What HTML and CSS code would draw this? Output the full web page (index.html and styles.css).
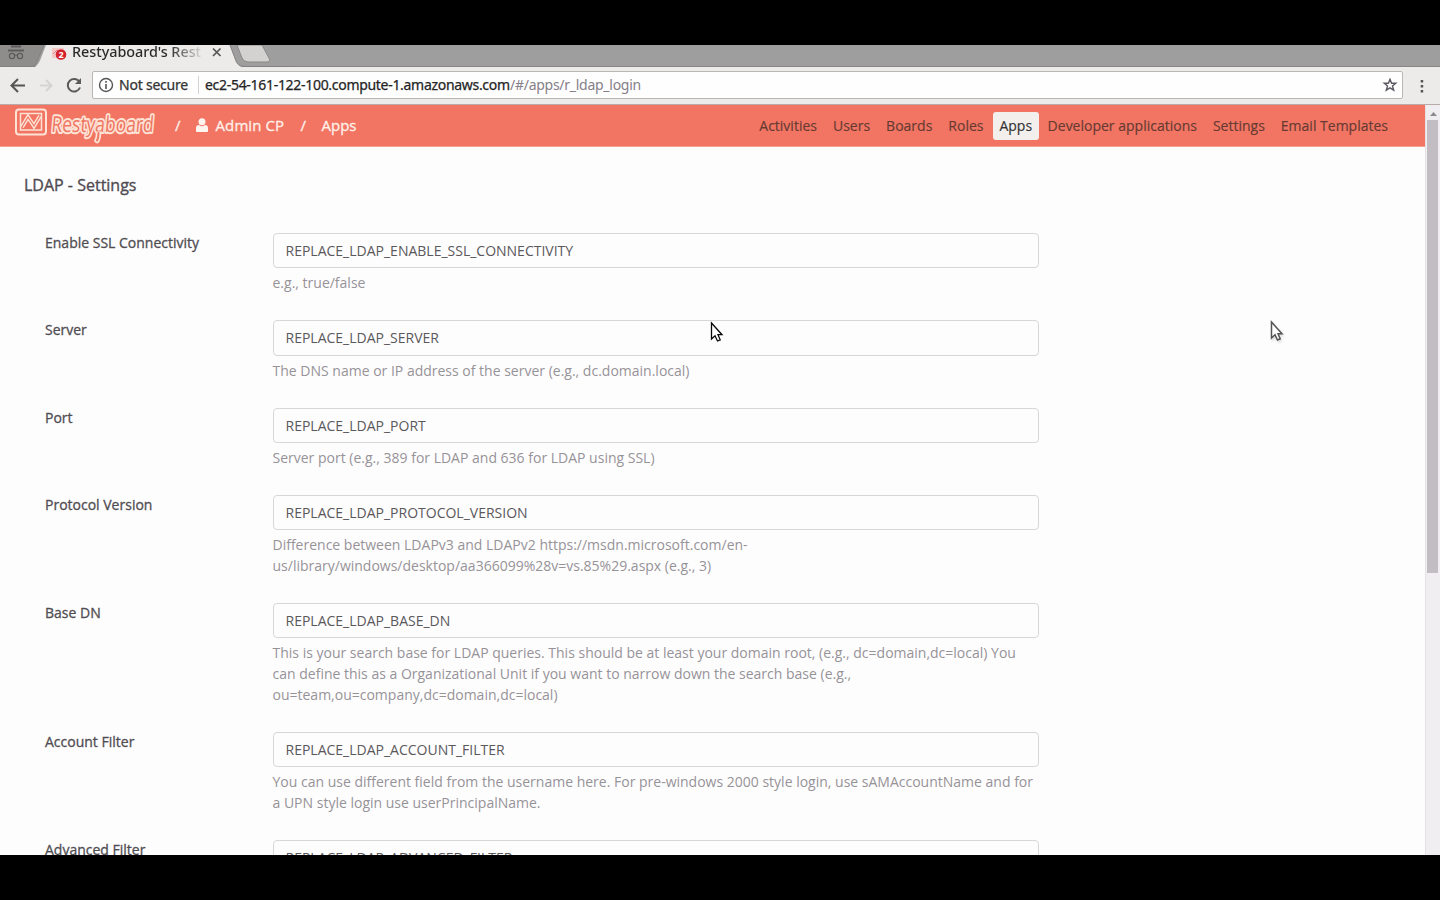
FILE: index.html
```html
<!DOCTYPE html>
<html lang="en">
<head>
<meta charset="utf-8">
<title>Restyaboard's Restyaboard</title>
<link rel="stylesheet" href="styles.css">
</head>
<body>
<div class="screen">
  <div class="tabstrip">
    <svg class="tabs" width="290" height="22" viewBox="0 0 290 22">
      <path d="M0 0H44L35 21H0Z" fill="#8f8d8c"/>
      <path d="M35 22Q39 19 41 13L46 0H230L236 16Q238 21 243 22Z" fill="#ecebea"/>
      <path d="M44 0L36 19Q35 21 32 21.500H0M230 0L236 16Q238 21 243 21.500H290" fill="none" stroke="#83817f"/>
      <path d="M237 0H262L270 15Q270 17 267 17H248Q244 17 242 13Z" fill="#d3d2d0" stroke="#8a8886"/>
      <g stroke="#5d5b5a" fill="none" stroke-width="1.200"><path d="M8 5.500H24M11 1.500H21" stroke-width="2"/><circle cx="12" cy="11" r="2.600"/><circle cx="20" cy="11" r="2.600"/><path d="M14.500 10.500Q16 9.500 17.500 10.500"/></g>
      <path d="M52 3H64V13H52Z" fill="#f3c8c6"/><path d="M53 9L57 5L60 8" stroke="#e78884" fill="none"/>
      <circle cx="61" cy="9.500" r="5.300" fill="#d3222b"/>
      <text x="58.500" y="13" class="badge">2</text>
      <path d="M213 3.500L220.500 11M220.500 3.500L213 11" stroke="#555" stroke-width="1.700"/>
    </svg>
    <span class="tab-title">Restyaboard's Rest</span>
  </div>
  <div class="toolbar">
    <svg class="nav-icons" width="92" height="36" viewBox="0 0 92 36" fill="none" stroke-width="2">
      <path d="M25 18.500H12M18 12L11.500 18.500L18 25" stroke="#555"/>
      <path d="M40 18.500H51M46 13L51.500 18.500L46 24" stroke="#d5d4d4"/>
      <path d="M79.500 15A6.300 6.300 0 1 0 80 20.500" stroke="#5a5a5a"/><path d="M81 11V17H75Z" fill="#5a5a5a"/>
    </svg>
    <div class="address">
      <svg width="16" height="16" viewBox="0 0 16 16" fill="none" stroke="#555"><circle cx="8" cy="8" r="6.500" stroke-width="1.400"/><path d="M8 7V12M8 4V5.700" stroke-width="1.600"/></svg>
      <span class="secure">Not secure</span><span class="divider"></span><span class="host">ec2-54-161-122-100.compute-1.amazonaws.com</span><span class="path">/#/apps/r_ldap_login</span>
      <svg class="star" width="16" height="16" viewBox="0 0 16 16"><path d="M8 2.300L9.600 6.300H13.700L10.500 9L11.700 13.200L8 10.800L4.300 13.200L5.500 9L2.300 6.300H6.400Z" fill="none" stroke="#5c5962" stroke-width="1.400"/></svg>
    </div>
    <svg class="more" width="6" height="16" viewBox="0 0 6 16" fill="#555"><path d="M1.700 2H4.200V4.500H1.700ZM1.700 7H4.200V9.500H1.700ZM1.700 12H4.200V14.500H1.700Z"/></svg>
  </div>
  <div class="viewport">
    <main class="page">
      <header class="header">
        <svg class="logo" width="144" height="41" viewBox="0 0 144 41">
          <rect x="2" y="4.500" width="30" height="25" rx="3" fill="none" stroke="#fde3d6" stroke-width="2"/>
          <rect x="6.500" y="8.500" width="21" height="16.500" fill="none" stroke="#fde3d6" stroke-width="1.500"/>
          <path d="M8 22L14 12L20 21L26 11" fill="none" stroke="#fde3d6" stroke-width="4"/>
          <path d="M8 22L14 12L20 21L26 11" fill="none" stroke="#ee7663" stroke-width="1.200"/>
          <g transform="skewX(-5)"><text x="39.500" y="27.500" textLength="102" lengthAdjust="spacingAndGlyphs" class="wordmark">Restyaboard</text></g>
          <path d="M84.500 29Q84.500 33 83 35.500" fill="none" stroke="#fde3d6" stroke-width="5.500" stroke-linecap="round"/><path d="M84.500 28Q84.500 33 83 35.500" fill="none" stroke="#ee7663" stroke-width="2" stroke-linecap="round"/>
        </svg>
        <div class="crumbs"><span>/</span>
          <svg class="user" width="12" height="14" viewBox="0 0 12 14" fill="#fff5ef"><circle cx="6" cy="3.700" r="3.500"/><path d="M0 13V10Q0 7 3 7Q6 9.500 9 7Q12 7 12 10V13Q12 14 11 14H1Q0 14 0 13Z"/></svg>
          <span class="admin">Admin CP</span><span class="slash">/</span><span class="current">Apps</span></div>
        <nav class="menu"><a>Activities</a><a>Users</a><a>Boards</a><a>Roles</a><a class="active">Apps</a><a>Developer applications</a><a>Settings</a><a>Email Templates</a></nav>
      </header>
      <h1 class="title">LDAP - Settings</h1>
      <form class="form">
        <div class="row"><label>Enable SSL Connectivity</label><div class="field"><div class="input">REPLACE_LDAP_ENABLE_SSL_CONNECTIVITY</div><p>e.g., true/false</p></div></div>
        <div class="row"><label>Server</label><div class="field"><div class="input">REPLACE_LDAP_SERVER</div><p>The DNS name or IP address of the server (e.g., dc.domain.local)</p></div></div>
        <div class="row"><label>Port</label><div class="field"><div class="input">REPLACE_LDAP_PORT</div><p>Server port (e.g., 389 for LDAP and 636 for LDAP using SSL)</p></div></div>
        <div class="row"><label>Protocol Version</label><div class="field"><div class="input">REPLACE_LDAP_PROTOCOL_VERSION</div><p>Difference between LDAPv3 and LDAPv2 https://msdn.microsoft.com/en-<br>us/library/windows/desktop/aa366099%28v=vs.85%29.aspx (e.g., 3)</p></div></div>
        <div class="row"><label>Base DN</label><div class="field"><div class="input">REPLACE_LDAP_BASE_DN</div><p>This is your search base for LDAP queries. This should be at least your domain root, (e.g., dc=domain,dc=local) You<br>can define this as a Organizational Unit if you want to narrow down the search base (e.g.,<br>ou=team,ou=company,dc=domain,dc=local)</p></div></div>
        <div class="row"><label>Account Filter</label><div class="field"><div class="input">REPLACE_LDAP_ACCOUNT_FILTER</div><p>You can use different field from the username here. For pre-windows 2000 style login, use sAMAccountName and for<br>a UPN style login use userPrincipalName.</p></div></div>
        <div class="row"><label>Advanced Filter</label><div class="field"><div class="input">REPLACE_LDAP_ADVANCED_FILTER</div></div></div>
      </form>
    </main>
    <div class="scrollbar"><svg width="15" height="15" viewBox="0 0 15 15"><path d="M4 11L7.500 7L11 11Z" fill="#8d8b8c"/></svg><div class="thumb"></div></div>
  </div>
  <svg class="cursor c1" width="16" height="24" viewBox="0 0 16 24"><path d="M1.500 2V18L5 14.800L7.500 20L10.200 18.800L8 13.700H12Z" fill="#fff" stroke="#080808" stroke-width="1.300"/></svg>
  <svg class="cursor c2" width="16" height="24" viewBox="0 0 16 24"><path d="M1.500 2V18L5 14.800L7.500 20L10.200 18.800L8 13.700H12Z" fill="#fff" stroke="#555356" stroke-width="1.500"/></svg>
</div>
</body>
</html>
```
FILE: styles.css
```css
* { box-sizing: border-box; }
body { margin: 0; background: #000; font-family: "Open Sans", sans-serif; }
.screen { position: relative; width: 1440px; height: 810px; margin-top: 45px; overflow: hidden; display: flex; flex-direction: column; background: #fefdfe; }
.tabstrip { height: 22px; flex: none; background: #9f9e9e; border-bottom: 1px solid #888685; position: relative; }
.tabs { display: block; }
.badge { font: bold 9px "Open Sans", sans-serif; fill: #fff; }
.tab-title { position: absolute; left: 72px; top: -3px; font: 500 14.400px/20px "Noto Sans", sans-serif; white-space: nowrap; letter-spacing: -.05px; background: linear-gradient(90deg, #292929 75%, #d5d5d5); -webkit-background-clip: text; color: transparent; }
.toolbar { height: 38px; flex: none; display: flex; background: #ecebea; border-bottom: 1px solid #b8aaa9; align-items: flex-start; }
.nav-icons { flex: none; }
.address { width: 1311px; height: 28px; margin-top: 4px; border: 1px solid #b9b8b5; border-radius: 2px; background: #fefefe; display: flex; align-items: center; padding: 0 5px; font: 14px/20px "Noto Sans", sans-serif; white-space: nowrap; }
.secure { margin-left: 5px; width: 79px; flex: none; color: #333; letter-spacing: -.22px; -webkit-text-stroke: .25px #333; }
.divider { width: 1px; height: 18px; background: #d2d1d1; margin-right: 6px; }
.host { color: #242424; width: 305px; flex: none; letter-spacing: -.3px; -webkit-text-stroke: .25px #242424; }
.path { color: #858088; letter-spacing: -.27px; }
.star { margin-left: auto; position: relative; left: 1px; }
.more { margin: 11px 0 0 16px; }
.viewport { display: flex; height: 750px; flex: none; }
.page { width: 1425px; }
.header { height: 42px; display: flex; align-items: center; background: #f27564; border-bottom: 1px solid #f7a092; }
.logo { margin-left: 14px; flex: none; }
.wordmark { font: 500 22px "Open Sans", sans-serif; fill: #ee7663; stroke: #fde3d6; stroke-width: 4px; paint-order: stroke; stroke-linejoin: round; }
.crumbs { display: flex; align-items: center; color: #fff1e9; font-size: 15px; line-height: 20px; margin: -2px 0 0 17px; white-space: nowrap; -webkit-text-stroke: .3px #fff1e9; }
.user { margin: 0 8px 0 15px; }
.admin { width: 85px; letter-spacing: .1px; }
.current { width: 40px; }
.slash { width: 21px; }
.menu { display: flex; margin-left: auto; margin-right: 37px; color: #663a31; font-size: 14px; line-height: 28px; white-space: nowrap; -webkit-text-stroke: .15px; }
.menu a { margin-left: 16px; }
.menu .active { background: #f2efed; color: #333; border-radius: 3px; padding: 0 6.500px; margin: 0 -7px 0 9.500px; }
.title { margin: 26px 0 0 24px; font-size: 16px; line-height: 24px; font-weight: 400; color: #504b52; -webkit-text-stroke: .35px #504b52; }
.form { margin: 36px 0 0 45px; font-size: 14px; line-height: 20.800px; }
.row { display: flex; margin-bottom: 26.100px; }
.row label { width: 227.500px; flex: none; color: #504d52; -webkit-text-stroke: .3px #504d52; }
.field { width: 766px; white-space: nowrap; }
.input { height: 35.400px; border: 1.500px solid #d9d6da; border-radius: 4px; color: #5a585b; padding: 0 12px; line-height: 34px; background: #fefdfe; }
.field p { margin: 5px 0 0; color: #969398; }
.scrollbar { width: 15px; background: #f0eef0; border-left: 1px solid #e4e2e4; }
.scrollbar svg { display: block; }
.thumb { width: 11px; height: 453px; margin-left: 1px; background: #c1bdc2; }
.cursor { position: absolute; }
.c1 { left: 710px; top: 276px; }
.c2 { left: 1270px; top: 275px; filter: drop-shadow(1px 2px 1px #ddd); }
```
